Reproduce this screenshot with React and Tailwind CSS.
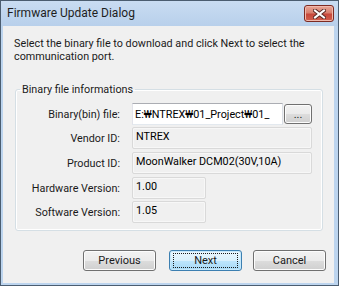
import React from "react";

function WinButton({ children, className = "", isDefault = false }) {
  return (
    <div
      className={
        "h-[21px] w-[73px] rounded-[3px] border flex items-center justify-center text-[11px] text-[#1a1a1a] " +
        (isDefault
          ? "border-[#3c7fb1] bg-[linear-gradient(#eaf6fd_0%,#d9f0fc_50%,#bee6fd_50%,#a7d9f5_100%)] shadow-[inset_0_0_0_1px_#c6e8fb] "
          : "border-[#707070] bg-[linear-gradient(#f2f2f2_0%,#ebebeb_50%,#dddddd_50%,#cfcfcf_100%)] shadow-[inset_0_0_0_1px_#fcfcfc] ") +
        className
      }
    >
      {isDefault ? (
        <div className="h-[15px] w-[65px] border border-dotted border-[#1a1a1a] flex items-center justify-center">
          {children}
        </div>
      ) : (
        children
      )}
    </div>
  );
}

function ReadBox({ children, className = "" }) {
  return (
    <div
      className={
        "h-[22px] border border-[#d9d9d9] rounded-[2px] shadow-[inset_0_0_0_1px_#f7f7f7] pl-[3px] pt-[2px] leading-[14px] text-black " +
        className
      }
    >
      {children}
    </div>
  );
}

function Row({ label, children, className = "" }) {
  return (
    <div className={"flex items-center " + className}>
      <div className="w-[104px] text-right text-[#1a1a1a]">{label}</div>
      <div className="ml-[12px] flex items-center">{children}</div>
    </div>
  );
}

export default function App() {
  return (
    <div
      className="w-[339px] h-[286px] bg-white"
      style={{}}
    >
      <div className="w-[339px] h-[286px] border border-[#4b5d70] bg-[#bcd4ee] flex flex-col font-['Roboto',sans-serif] text-[10.8px] leading-[13px]">
        {/* Title bar */}
        <div className="h-[25px] flex items-start justify-between pl-[6px] pr-[4px] bg-[linear-gradient(#c9dcf2,#b8d0eb)]">
          <div className="mt-[5px] text-[12px] leading-[15px] text-[#1e1e1e]">Firmware Update Dialog</div>
          <div className="mt-[4px] w-[30px] h-[17px] rounded-[3px] border border-[#7d2a22] bg-[linear-gradient(#e8a596_0%,#d8806f_45%,#c7473a_55%,#d2604e_100%)] shadow-[inset_0_0_0_1px_#f0b9ad] flex items-center justify-center">
            <svg width="13" height="10" viewBox="0 0 13 10">
              <path d="M2 1.5 L11 8.5 M11 1.5 L2 8.5" stroke="#5a2a25" strokeWidth="4" strokeLinecap="square" />
              <path d="M2 1.5 L11 8.5 M11 1.5 L2 8.5" stroke="#ffffff" strokeWidth="2" strokeLinecap="square" />
            </svg>
          </div>
        </div>
        {/* Content */}
        <div className="ml-[2px] mr-[4px] mb-[2px] flex-1 bg-[#f0f0f0] flex flex-col pt-[11px] text-[#1a1a1a]">
          <p className="pl-[11px]">
            Select the binary file to download and click Next to select the
            <br />
            communication port.
          </p>
          <fieldset className="mt-[20px] ml-[12px] w-[308px] h-[148px] border border-[#d5dfe5] rounded-[3px] shadow-[inset_0_0_0_1px_#ffffff]">
            <legend className="ml-[4px] px-[2px] text-[#1a1a1a]">Binary file informations</legend>
            <Row label="Binary(bin) file:" className="mt-[7px]">
              <div className="h-[22px] w-[151px] bg-white border border-[#abadb3] border-l-[#e2e3ea] border-r-[#dbdfe6] border-b-[#e3e9ef] pl-[2px] flex items-center text-black whitespace-nowrap overflow-hidden">
                E:₩NTREX₩01_Project₩01_
              </div>
              <WinButton className="ml-[1px] !w-[28px] !h-[20px]">...</WinButton>
            </Row>
            <Row label="Vendor ID:" className="mt-[2px]">
              <ReadBox className="w-[180px]">NTREX</ReadBox>
            </Row>
            <Row label="Product ID:" className="mt-[3px]">
              <ReadBox className="w-[180px]">MoonWalker DCM02(30V,10A)</ReadBox>
            </Row>
            <Row label="Hardware Version:" className="mt-[3px]">
              <ReadBox className="w-[74px]">1.00</ReadBox>
            </Row>
            <Row label="Software Version:" className="mt-[2px]">
              <ReadBox className="w-[74px]">1.05</ReadBox>
            </Row>
          </fieldset>
          <div className="mt-[19px] flex justify-end pr-[8px]">
            <WinButton>Previous</WinButton>
            <WinButton isDefault className="ml-[13px]">Next</WinButton>
            <WinButton className="ml-[11px]">Cancel</WinButton>
          </div>
        </div>
      </div>
    </div>
  );
}
